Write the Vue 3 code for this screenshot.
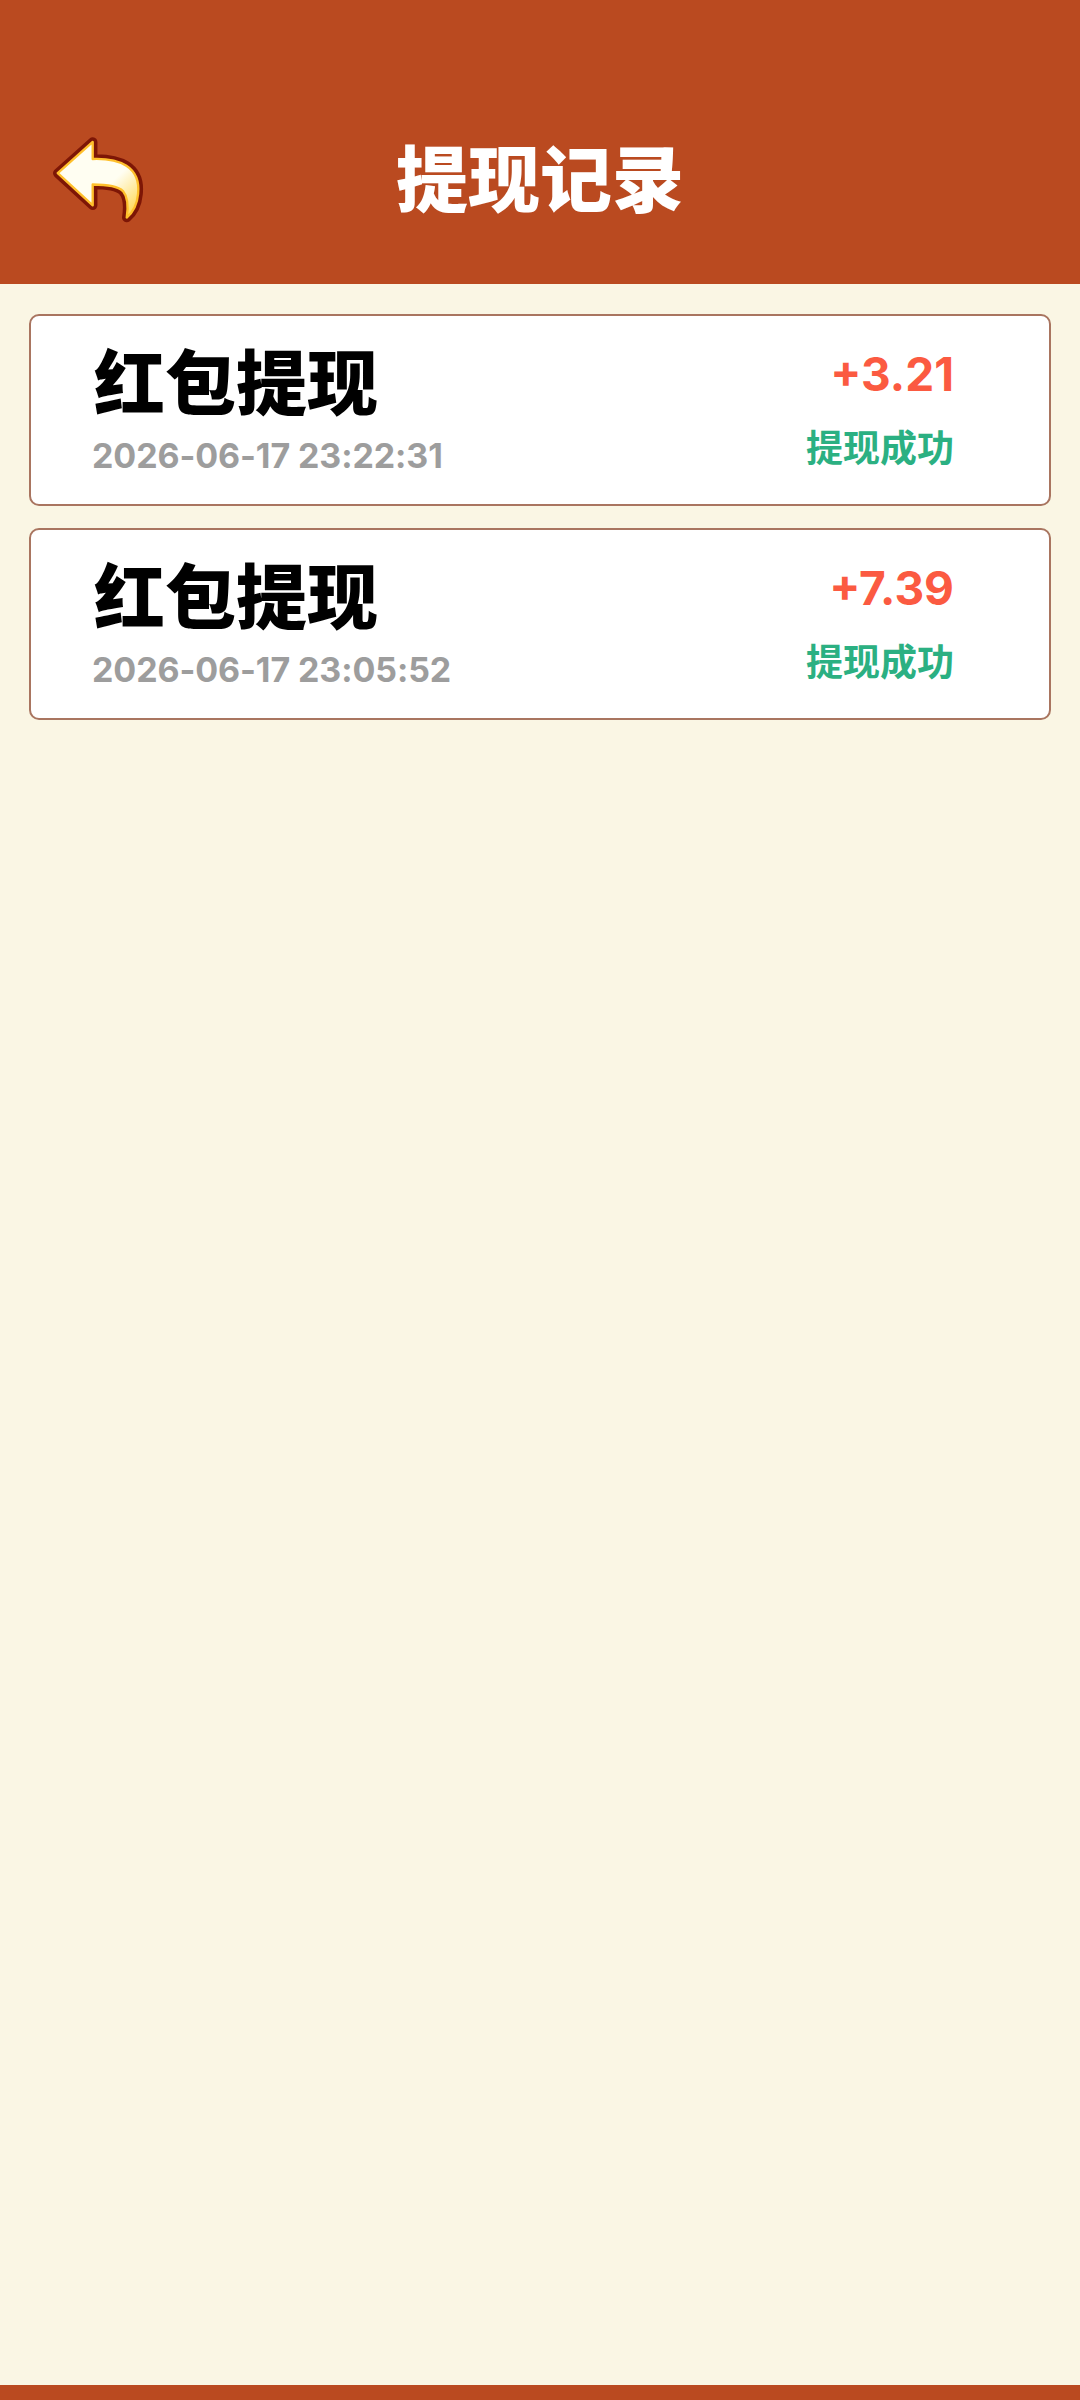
<script setup>
const records = [
  { id: 1, time: '2026-06-17 23:22:31', amount: '+3.21' },
  { id: 2, time: '2026-06-17 23:05:52', amount: '+7.39' }
]
</script>

<template>
  <div class="page">
    <header class="bar">
      <svg class="back" viewBox="0 0 110 100" aria-hidden="true">
        <defs>
          <linearGradient id="fill" x1="0" y1="0" x2="1" y2="1">
            <stop offset="0.6" stop-color="#fffef2" />
            <stop offset="1" stop-color="#ffd23a" />
          </linearGradient>
        </defs>
        <path
          class="arrow-outer"
          d="M5 38 L42 5 L42 23 C70 22 93 31 90 60 C89 71 84 80 78 85 C80 72 79 63 74 57 C68 51 55 50 42 50 L42 72 Z"
        />
        <path
          class="arrow-inner"
          d="M5 38 L42 5 L42 23 C70 22 93 31 90 60 C89 71 84 80 78 85 C80 72 79 63 74 57 C68 51 55 50 42 50 L42 72 Z"
        />
      </svg>
      <h1 class="title">提现记录</h1>
    </header>

    <main class="list">
      <article v-for="r in records" :key="r.id" class="card">
        <div class="left">
          <div class="name">红包提现</div>
          <div class="time">{{ r.time }}</div>
        </div>
        <div class="right">
          <div class="amount">{{ r.amount }}</div>
          <div class="status">提现成功</div>
        </div>
      </article>
    </main>

    <footer class="foot"></footer>
  </div>
</template>

<style scoped>
.page {
  width: 1080px;
  height: 2400px;
  display: flex;
  flex-direction: column;
  background: #faf6e4;
  font-family: Inter, "Noto Sans CJK SC", sans-serif;
}
.bar {
  position: relative;
  height: 284px;
  flex: none;
  background: #ba4a20;
  display: flex;
  justify-content: center;
  align-items: flex-end;
  padding-bottom: 69px;
  box-sizing: border-box;
}
.back {
  position: absolute;
  left: 53px;
  top: 137px;
  width: 104px;
  height: 95px;
}
.arrow-outer {
  fill: none;
  stroke: #7d1606;
  stroke-width: 10;
  stroke-linejoin: round;
}
.arrow-inner {
  fill: url(#fill);
  stroke: #ffc02c;
  stroke-width: 2.5;
  stroke-linejoin: round;
}
.title {
  margin: 0;
  font-family: "Noto Sans CJK SC", sans-serif;
  font-size: 72px;
  font-weight: 900;
  line-height: 80px;
  color: #fff;
}
.list {
  flex: 1;
  display: flex;
  flex-direction: column;
  gap: 22px;
  padding: 30px 29px 0;
}
.card {
  height: 192px;
  box-sizing: border-box;
  display: flex;
  justify-content: space-between;
  background: #fff;
  border: 2px solid #a97560;
  border-radius: 10px;
  padding: 0 95px 0 61px;
}
.name {
  margin-top: 19px;
  margin-left: 2px;
  font-family: "Noto Sans CJK SC", sans-serif;
  font-size: 71px;
  font-weight: 900;
  line-height: 86px;
  color: #000;
}
.time {
  margin-top: 13px;
  font-size: 34px;
  font-weight: 700;
  letter-spacing: -0.1px;
  line-height: 44px;
  color: #9d9d9d;
}
.right {
  display: flex;
  flex-direction: column;
  align-items: flex-end;
}
.amount {
  margin-top: 28px;
  font-size: 46px;
  font-weight: 700;
  line-height: 60px;
  color: #fb5a41;
}
.status {
  margin-top: 17px;
  font-family: "Noto Sans CJK SC", sans-serif;
  font-size: 37px;
  font-weight: 700;
  line-height: 50px;
  color: #2bb082;
}
.foot {
  height: 15px;
  flex: none;
  background: #ba4a20;
}
</style>
